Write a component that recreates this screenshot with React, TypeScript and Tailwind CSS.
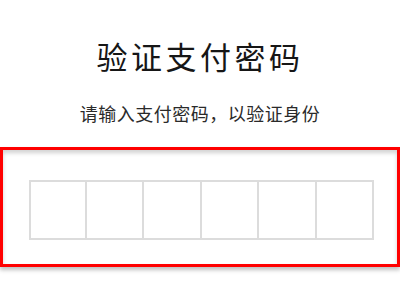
export default function App() {
  const cells = [0, 1, 2, 3, 4, 5]

  return (
    <div className="w-[400px] h-[300px] bg-white overflow-hidden font-['Noto_Sans_CJK_SC',sans-serif]">
      {/* Header */}
      <div className="pt-[34px] text-center">
        <h1 className="text-[31px] leading-[44px] tracking-[3.5px] text-[#161616] font-normal">验证支付密码</h1>
        <p className="mt-[22px] text-[18px] leading-[26px] tracking-[0.5px] text-[#2a2a2a]">
          请输入支付密码，以验证身份
        </p>
      </div>

      {/* Password input, highlighted */}
      <div className="mt-[21px] h-[120px] border-[3px] border-[#ff0000] shadow-[0_3px_4px_rgba(0,0,0,0.25),inset_0_3px_4px_rgba(0,0,0,0.18)] flex items-center">
        <div className="ml-[26px] mt-[6px] flex">
          {cells.map((i) => (
            <div
              key={i}
              className={`w-[57.5px] h-[60px] border-y-2 border-r-2 border-[#dcdcdc] ${i === 0 ? "border-l-2" : ""}`}
            />
          ))}
        </div>
      </div>
    </div>
  )
}
